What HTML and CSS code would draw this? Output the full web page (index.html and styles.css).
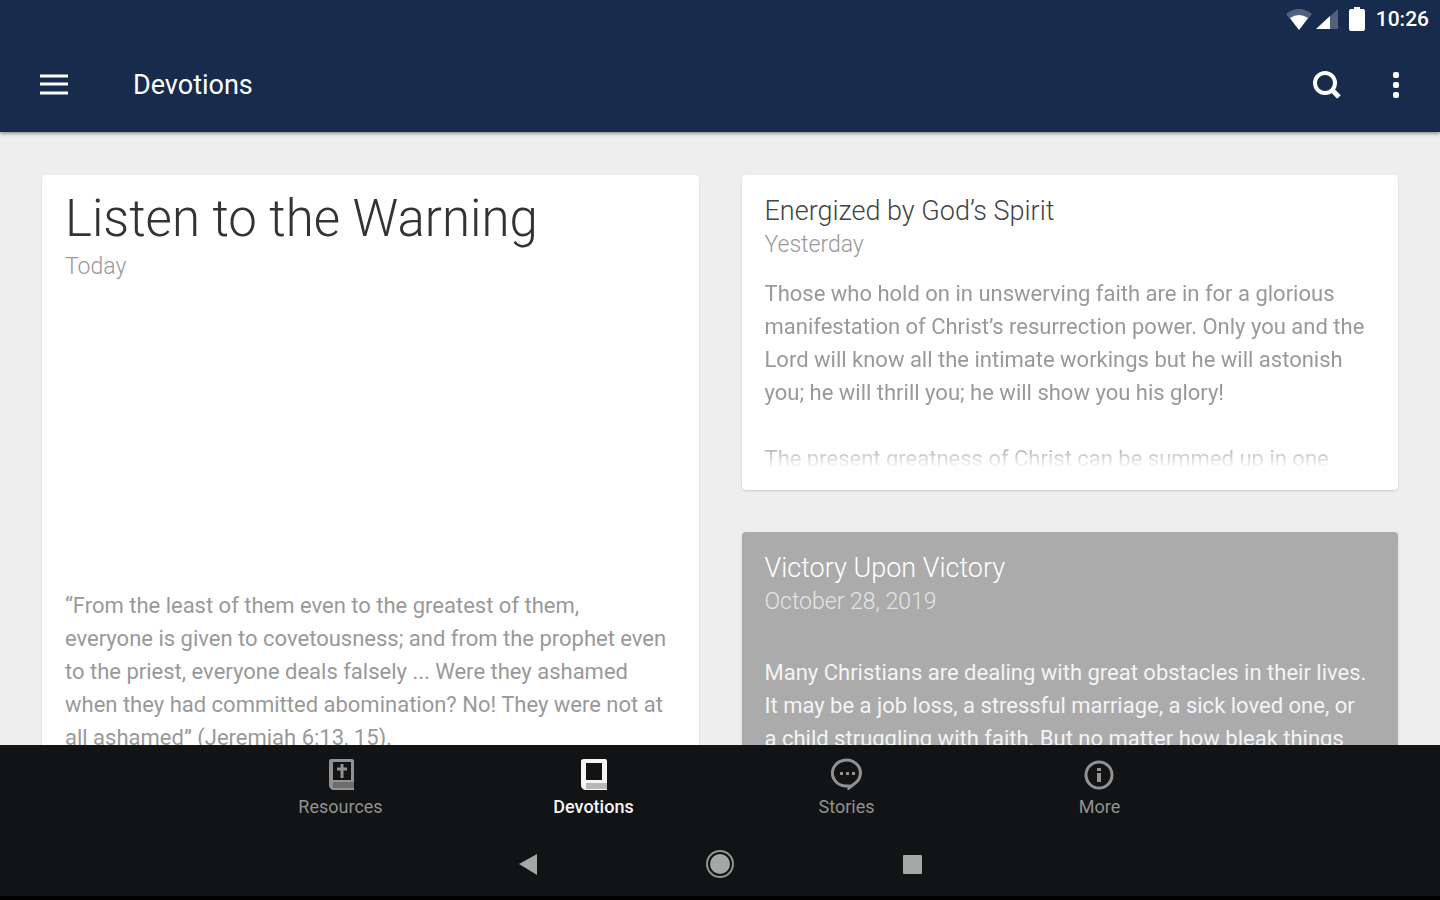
FILE: index.html
```html
<!DOCTYPE html>
<html lang="en">
<head>
  <meta charset="UTF-8" />
  <meta name="viewport" content="width=device-width, initial-scale=1" />
  <title>Devotions</title>
  <link rel="stylesheet" href="styles.css">
</head>
<body>
  <header class="app-header">
    <div class="status-bar">
      <svg class="status-wifi" width="26" height="21" viewBox="0 0 26 21" aria-hidden="true">
        <path d="M13 21 0 5Q13-5 26 5z" fill="#52627d"/>
        <path d="M13 21 4 9Q13 3 22 9z" fill="#fff"/>
      </svg>
      <svg class="status-signal" width="22" height="20" viewBox="0 0 22 20" aria-hidden="true">
        <path d="M22 0v20H0z" fill="#52627d"/>
        <path d="M14 7v13H0z" fill="#fff"/>
      </svg>
      <svg class="status-battery" width="16" height="24" viewBox="0 0 16 24" aria-hidden="true">
        <path d="M5 0h6v2h3q2 0 2 2v18q0 2-2 2H2q-2 0-2-2V4q0-2 2-2h3z" fill="#fff"/>
      </svg>
      <span class="clock">10:26</span>
    </div>
    <div class="toolbar">
      <button class="icon-button" type="button" aria-label="Menu">
        <svg width="28" height="22" viewBox="0 0 28 22">
          <path d="M0 2h28M0 10h28M0 19h28" stroke="#fff" stroke-width="3"/>
        </svg>
      </button>
      <h1 class="toolbar-title">Devotions</h1>
      <button class="icon-button" type="button" aria-label="Search">
        <svg width="28" height="28" viewBox="0 0 28 28">
          <circle cx="12" cy="12" r="10" fill="none" stroke="#fff" stroke-width="4"/>
          <path d="m19 19 7 7" stroke="#fff" stroke-width="5"/>
        </svg>
      </button>
      <button class="icon-button more-button" type="button" aria-label="More options">
        <svg width="6" height="26" viewBox="0 0 6 26">
          <rect width="6" height="6" rx="2" fill="#fff"/>
          <rect y="10" width="6" height="6" rx="2" fill="#fff"/>
          <rect y="20" width="6" height="6" rx="2" fill="#fff"/>
        </svg>
      </button>
    </div>
  </header>

  <main class="feed">
    <article class="card card-featured">
      <h2 class="featured-title">Listen to the Warning</h2>
      <p class="date">Today</p>
      <div class="featured-image"></div>
      <p class="text">“From the least of them even to the greatest of them,<br>everyone is given to covetousness; and from the prophet even<br>to the priest, everyone deals falsely ... Were they ashamed<br>when they had committed abomination? No! They were not at<br>all ashamed” (Jeremiah 6:13, 15).</p>
    </article>

    <div class="column">
      <article class="card">
        <h2 class="title">Energized by God’s Spirit</h2>
        <p class="date">Yesterday</p>
        <div class="excerpt">
          <p class="text">Those who hold on in unswerving faith are in for a glorious manifestation of Christ’s resurrection power. Only you and the Lord will know all the intimate workings but he will astonish you; he will thrill you; he will show you his glory!</p>
          <p class="text">The present greatness of Christ can be summed up in one</p>
        </div>
      </article>

      <article class="card card-gray">
        <h2 class="title">Victory Upon Victory</h2>
        <p class="date">October 28, 2019</p>
        <p class="text">Many Christians are dealing with great obstacles in their lives.<br>It may be a job loss, a stressful marriage, a sick loved one, or<br>a child struggling with faith. But no matter how bleak things</p>
      </article>
    </div>
  </main>

  <footer class="bottom">
    <nav class="tabs">
      <a class="tab" href="#resources">
        <svg width="32" height="32" viewBox="0 0 32 32" aria-hidden="true">
          <path d="M6 1h21q2 0 2 2v29H8q-4-1-4-5V3q0-2 2-2z" fill="currentColor"/>
          <path d="M8 4h18v18H8z" fill="#111315"/>
          <path d="M8 24h21v6H8z" fill="#000" opacity=".25"/>
          <path d="M17 6v14M12 11h10" stroke="currentColor" stroke-width="3"/>
        </svg>
        <span>Resources</span>
      </a>
      <a class="tab tab-active" href="#devotions">
        <svg width="32" height="32" viewBox="0 0 32 32" aria-hidden="true">
          <path d="M6 1h21q2 0 2 2v29H7q-4-1-4-5V3q0-2 3-2z" fill="currentColor"/>
          <path d="M8 5h16v17H8z" fill="#111315"/>
          <path d="M8 25h21v6H8z" fill="#000" opacity=".25"/>
        </svg>
        <span>Devotions</span>
      </a>
      <a class="tab" href="#stories">
        <svg width="32" height="32" viewBox="0 0 32 32" aria-hidden="true">
          <path d="M14 28A14 13 0 1 1 23 26l-5 4v-2z" fill="none" stroke="currentColor" stroke-width="3"/>
          <path d="M9 14h3v3H9zM15 14h3v3h-3zM21 14h3v3h-3z" fill="currentColor"/>
        </svg>
        <span>Stories</span>
      </a>
      <a class="tab" href="#more">
        <svg width="32" height="32" viewBox="0 0 32 32" aria-hidden="true">
          <circle cx="15" cy="17" r="13" fill="none" stroke="currentColor" stroke-width="3"/>
          <path d="M13 10h4v3h-4zM13 15h4v9h-4z" fill="currentColor"/>
        </svg>
        <span>More</span>
      </a>
    </nav>
    <div class="system-bar">
      <button class="system-button" type="button" aria-label="Back">
        <svg width="28" height="28" viewBox="0 0 28 28"><path d="M5 14 23 4v21z" fill="#a6a8a6"/></svg>
      </button>
      <button class="system-button" type="button" aria-label="Home">
        <svg width="28" height="28" viewBox="0 0 28 28">
          <circle cx="14" cy="14" r="13" fill="none" stroke="#929492" stroke-width="2"/>
          <circle cx="14" cy="14" r="10" fill="#a6a8a6"/>
        </svg>
      </button>
      <button class="system-button" type="button" aria-label="Recent apps">
        <svg width="28" height="28" viewBox="0 0 28 28"><rect x="5" y="5" width="19" height="19" rx="1" fill="#a6a8a6"/></svg>
      </button>
    </div>
  </footer>
</body>
</html>
```
FILE: styles.css
```css
* {
  box-sizing: border-box;
}

body {
  margin: 0;
  height: 100vh;
  display: flex;
  flex-direction: column;
  overflow: hidden;
  background: #eee;
  font-family: Roboto, "Liberation Sans", sans-serif;
}

h1,
h2,
p {
  margin: 0;
}

button {
  padding: 0;
  border: 0;
  background: none;
}

svg {
  display: block;
}

/* Status bar and toolbar */
.app-header {
  position: relative;
  background: #172b4d;
  color: #fff;
  box-shadow: 0 1px 4px rgba(0, 0, 0, 0.5);
}

.status-bar {
  height: 38px;
  padding: 0 11px;
  display: flex;
  align-items: center;
  justify-content: flex-end;
}

.status-signal {
  margin-left: 4px;
}

.status-battery {
  margin: 0 11px;
}

.clock {
  font-size: 21px;
  font-weight: 500;
  line-height: 38px;
}

.toolbar {
  height: 94px;
  padding: 0 41px 0 40px;
  display: flex;
  align-items: center;
}

.toolbar-title {
  flex: 1;
  margin-left: 65px;
  font-size: 27px;
  font-weight: 400;
  line-height: 32px;
}

.more-button {
  margin-left: 52px;
}

/* Cards */
.feed {
  flex: 1;
  min-height: 0;
  overflow: hidden;
  padding: 43px 42px 0;
  display: grid;
  grid-template-columns: 1fr 1fr;
  gap: 43px;
}

.column {
  display: flex;
  flex-direction: column;
  gap: 42px;
}

.card {
  flex: none;
  padding: 19px 22px 22px 23px;
  border-radius: 4px;
  background: #fff;
  color: #999;
  box-shadow: 0 1px 2px rgba(0, 0, 0, 0.15);
}

.featured-title {
  margin-bottom: 6px;
  font-size: 51px;
  font-weight: 300;
  line-height: 50px;
  color: #333;
}

.featured-image {
  height: 306px;
}

.title {
  font-size: 27px;
  font-weight: 300;
  line-height: 34px;
  color: #444;
}

.date {
  font-size: 23px;
  font-weight: 300;
  line-height: 33px;
  color: #999;
}

.text {
  font-size: 22px;
  font-weight: 400;
  line-height: 33px;
}

/* Long posts fade out at the bottom */
.excerpt {
  height: 191px;
  margin-top: 16px;
  overflow: hidden;
  -webkit-mask-image: linear-gradient(#000 165px, transparent);
  mask-image: linear-gradient(#000 165px, transparent);
}

.excerpt .text + .text {
  margin-top: 33px;
}

.card-gray {
  background: #ababab;
  color: #f4f4f4;
}

.card-gray .title {
  color: #fff;
}

.card-gray .date {
  margin-bottom: 38px;
  color: #e4e4e4;
}

/* Bottom navigation */
.bottom {
  position: relative;
  background: #111315;
  border-bottom: 4px solid #000;
}

.tabs {
  height: 86px;
  padding: 0 214px;
  display: grid;
  grid-template-columns: repeat(4, 1fr);
}

.tab {
  padding-top: 13px;
  display: flex;
  flex-direction: column;
  align-items: center;
  gap: 7px;
  color: #929292;
  font-size: 18px;
  font-weight: 400;
  line-height: 20px;
  text-decoration: none;
}

.tab-active {
  color: #f5f5f5;
  font-weight: 500;
}

.system-bar {
  height: 65px;
  display: flex;
  align-items: center;
  justify-content: center;
  gap: 164px;
}
```
